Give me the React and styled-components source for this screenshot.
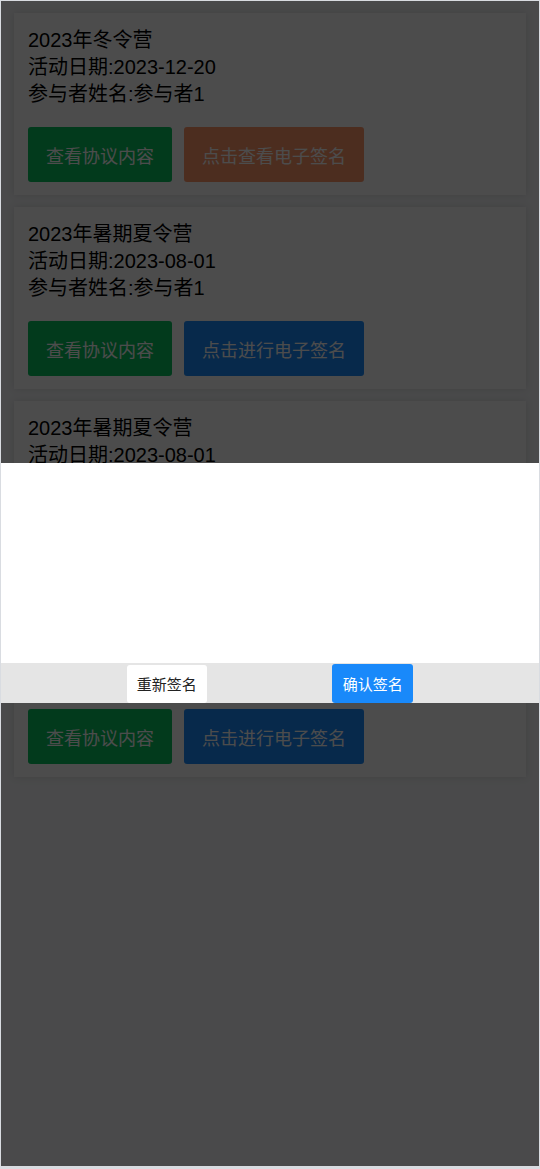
import React from "react";
import styled, { createGlobalStyle } from "styled-components";

const GlobalStyle = createGlobalStyle`
  html, body {
    margin: 0;
    padding: 0;
    background: #ffffff;
  }
  * {
    box-sizing: border-box;
  }
`;

const Page = styled.div`
  position: relative;
  width: 540px;
  height: 1169px;
  border: 1px solid #d9dce1;
  border-bottom-width: 3px;
  background: #f7f8fa;
  overflow: hidden;
  font-family: "Liberation Sans", "Noto Sans CJK SC", sans-serif;
`;

const List = styled.div`
  display: flex;
  flex-direction: column;
  gap: 12px;
  padding: 12px 13px;
`;

const Card = styled.div`
  background: #ffffff;
  padding: 14px 14px 13px;
  box-shadow: 0 0 8px rgba(0, 0, 0, 0.12);
`;

const Info = styled.div`
  font-size: 20px;
  line-height: 27px;
  color: #000;
`;

const Actions = styled.div`
  display: flex;
  gap: 12px;
  margin-top: 19px;
`;

const ActionButton = styled.button`
  height: 55px;
  padding: 0 18px;
  border: none;
  border-radius: 3px;
  font-family: inherit;
  font-size: 18px;
  color: #ffffff;
  background: ${(p) => p.$color};
`;

const Overlay = styled.div`
  position: absolute;
  inset: 0;
  padding-bottom: 2px;
  background: rgba(0, 0, 0, 0.7);
  display: flex;
  flex-direction: column;
  justify-content: center;
`;

const SignPad = styled.div`
  height: 200px;
  background: #ffffff;
`;

const SignBar = styled.div`
  height: 40px;
  background: #e5e5e5;
  display: flex;
  justify-content: space-evenly;
  align-items: flex-end;
`;

const SignButton = styled.button`
  width: ${(p) => (p.$primary ? "81px" : "80px")};
  height: ${(p) => (p.$primary ? "39px" : "38px")};
  padding: 0;
  border: none;
  border-radius: 3px;
  font-family: inherit;
  font-size: 15px;
  color: ${(p) => (p.$primary ? "#ffffff" : "#222222")};
  background: ${(p) => (p.$primary ? "#1989fa" : "#ffffff")};
`;

const camps = [
  { id: 1, title: "2023年冬令营", date: "2023-12-20", signed: true },
  { id: 2, title: "2023年暑期夏令营", date: "2023-08-01", signed: false },
  { id: 3, title: "2023年暑期夏令营", date: "2023-08-01", signed: false },
  { id: 4, title: "2023年暑期夏令营", date: "2023-08-01", signed: false },
];

const App = () => {
  return (
    <>
      <GlobalStyle />
      <Page>
        <List>
          {camps.map((camp) => (
            <Card key={camp.id}>
              <Info>
                <div>{camp.title}</div>
                <div>活动日期:{camp.date}</div>
                <div>参与者姓名:参与者1</div>
              </Info>
              <Actions>
                <ActionButton $color="#07c160">查看协议内容</ActionButton>
                {camp.signed ? (
                  <ActionButton $color="#ff976a">点击查看电子签名</ActionButton>
                ) : (
                  <ActionButton $color="#1989fa">点击进行电子签名</ActionButton>
                )}
              </Actions>
            </Card>
          ))}
        </List>
        <Overlay>
          <SignPad />
          <SignBar>
            <SignButton>重新签名</SignButton>
            <SignButton $primary>确认签名</SignButton>
          </SignBar>
        </Overlay>
      </Page>
    </>
  );
};

export default App;
